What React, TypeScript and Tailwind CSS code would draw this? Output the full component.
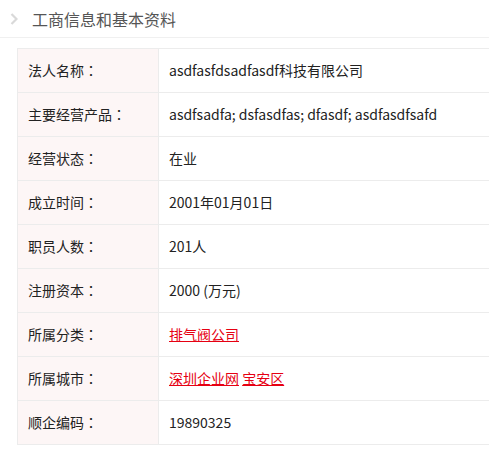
import React from 'react';

const rows: { label: string; value: React.ReactNode }[] = [
  { label: '法人名称', value: 'asdfasfdsadfasdf科技有限公司' },
  { label: '主要经营产品', value: 'asdfsadfa; dsfasdfas; dfasdf; asdfasdfsafd' },
  { label: '经营状态', value: '在业' },
  { label: '成立时间', value: '2001年01月01日' },
  { label: '职员人数', value: '201人' },
  { label: '注册资本', value: '2000 (万元)' },
  {
    label: '所属分类',
    value: (
      <a href="#" className="text-[#e60012] underline">
        排气阀公司
      </a>
    ),
  },
  {
    label: '所属城市',
    value: (
      <>
        <a href="#" className="text-[#e60012] underline">
          深圳企业网
        </a>{' '}
        <a href="#" className="text-[#e60012] underline">
          宝安区
        </a>
      </>
    ),
  },
  { label: '顺企编码', value: '19890325' },
];

export default function App() {
  return (
    <div
      className="w-[489px] h-[449px] overflow-hidden bg-white text-[#333]"
      style={{ fontFamily: '"Noto Sans CJK SC", "Noto Sans", sans-serif' }}
    >
      {/* title bar */}
      <div className="h-[38px] border-b border-[#f0f0f0] flex items-center">
        <svg width="8" height="12" viewBox="0 0 8 12" className="ml-[10px]">
          <path d="M1.5 1 L6.5 6 L1.5 11" fill="none" stroke="#d9d9d9" strokeWidth="2.2" />
        </svg>
        <span className="ml-[14px] text-[16px] text-[#555] leading-none">工商信息和基本资料</span>
      </div>

      <table className="ml-[17px] mt-[10px] w-[520px] border-collapse">
        <tbody>
          {rows.map((r, i) => (
            <tr key={i} className="h-[44px]">
              <td className="w-[141px] bg-[#fdf6f6] border border-[#ececec] pl-[10px] text-[14px] text-[#222] align-middle">
                {r.label}
                <span style={{ fontFamily: '"Noto Sans CJK JP", sans-serif' }}>：</span>
              </td>
              <td className="border border-[#ececec] pl-[10px] text-[14px] text-[#222] align-middle">
                {r.value}
              </td>
            </tr>
          ))}
        </tbody>
      </table>
    </div>
  );
}
